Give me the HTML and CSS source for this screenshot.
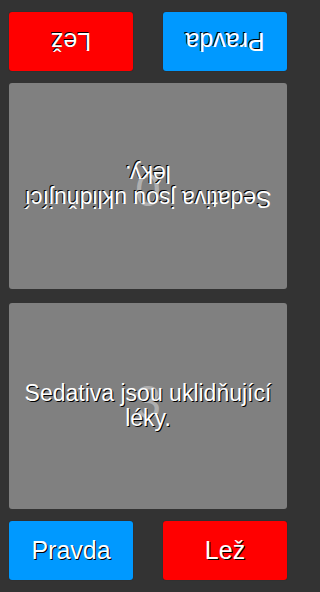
FILE: index.html
```html
<!DOCTYPE html>
<html lang="cs">
<head>
<meta charset="utf-8">
<title>Pravda nebo lež</title>
<link rel="stylesheet" href="styles.css">
</head>
<body>
<div class="board">
  <section class="player player-top">
    <div class="card">
      <span class="score">0</span>
      <p class="statement">Sedativa jsou uklidňující léky.</p>
    </div>
    <div class="answers">
      <button class="btn btn-true">Pravda</button>
      <button class="btn btn-false">Lež</button>
    </div>
  </section>
  <section class="player player-bottom">
    <div class="card">
      <span class="score">3</span>
      <p class="statement">Sedativa jsou uklidňující léky.</p>
    </div>
    <div class="answers">
      <button class="btn btn-true">Pravda</button>
      <button class="btn btn-false">Lež</button>
    </div>
  </section>
</div>
</body>
</html>
```
FILE: styles.css
```css
html, body {
  margin: 0;
  padding: 0;
  background: #333333;
}
body {
  font-family: "Liberation Sans", Arial, sans-serif;
  color: #ffffff;
}
.board {
  box-sizing: border-box;
  width: 296px;
  height: 592px;
  padding: 12px 9px;
  display: flex;
  flex-direction: column;
  gap: 14px;
}
.player {
  flex: 1;
  display: flex;
  flex-direction: column;
  gap: 12px;
}
.player-top {
  transform: rotate(180deg);
}
.card {
  flex: 1;
  position: relative;
  background: #808080;
  border-radius: 3px;
  display: flex;
  align-items: center;
  justify-content: center;
  text-align: center;
}
.score {
  position: absolute;
  left: 0;
  right: 0;
  top: 50%;
  transform: translateY(-50%);
  margin-top: -4px;
  font-size: 46px;
  line-height: 46px;
  color: rgba(255, 255, 255, 0.4);
}
.statement {
  position: relative;
  margin: 0;
  padding: 0 14px;
  font-size: 23px;
  line-height: 25px;
  text-shadow: 1px 1px 0 #000;
}
.answers {
  height: 59px;
  display: flex;
  justify-content: space-between;
}
.btn {
  width: 124px;
  border: none;
  border-radius: 3px;
  font-family: "Liberation Sans", Arial, sans-serif;
  font-size: 25px;
  color: #ffffff;
  text-shadow: 1px 1px 0 #000;
  box-shadow: 0 0 1px rgba(0, 0, 0, 0.6);
  padding: 0;
  cursor: pointer;
}
.btn-true {
  background: #0099ff;
}
.btn-false {
  background: #ff0000;
}
```
